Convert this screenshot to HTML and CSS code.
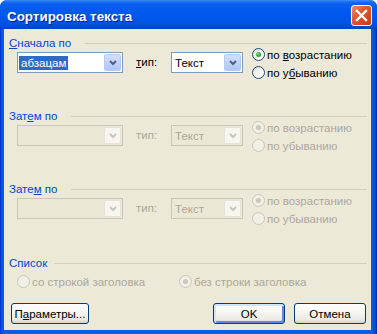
FILE: index.html
```html
<!DOCTYPE html>
<html lang="ru">

<head>
    <meta charset="UTF-8">
    <meta name="viewport" content="width=device-width, initial-scale=1.0">
    <title>Сортировка текста</title>
    <link rel="stylesheet" href="styles.css">
</head>

<body>
    <div class="window">
        <div class="titlebar">
            <div class="title">Сортировка текста</div>
            <div class="close">
                <svg width="13" height="13" viewBox="0 0 13 13">
                    <path d="M2 2 L11 11 M11 2 L2 11" stroke="#fff" stroke-width="2.3" stroke-linecap="square" fill="none" />
                </svg>
            </div>
        </div>

        <div class="client">
            <!-- first key -->
            <div class="group">
                <div class="group-head">
                    <span class="group-label"><u>С</u>начала по</span>
                    <span class="rule"></span>
                </div>
                <div class="sort-row">
                    <div class="combo combo-field">
                        <span class="combo-value"><span class="selected">абзацам</span></span>
                        <span class="drop"><svg width="8" height="6" viewBox="0 0 8 6"><polyline points="1,1 4,4 7,1" /></svg></span>
                    </div>
                    <span class="type-label"><u>т</u>ип:</span>
                    <div class="combo combo-type">
                        <span class="combo-value">Текст</span>
                        <span class="drop"><svg width="8" height="6" viewBox="0 0 8 6"><polyline points="1,1 4,4 7,1" /></svg></span>
                    </div>
                    <div class="radios">
                        <div class="radio">
                            <span class="radio-box"><span class="dot"></span></span>
                            <span class="radio-text">по <u>в</u>озрастанию</span>
                        </div>
                        <div class="radio">
                            <span class="radio-box"></span>
                            <span class="radio-text">по у<u>б</u>ыванию</span>
                        </div>
                    </div>
                </div>
            </div>

            <!-- second key -->
            <div class="group group-next">
                <div class="group-head">
                    <span class="group-label">Зат<u>е</u>м по</span>
                    <span class="rule"></span>
                </div>
                <div class="sort-row disabled">
                    <div class="combo combo-field">
                        <span class="combo-value"></span>
                        <span class="drop"><svg width="8" height="6" viewBox="0 0 8 6"><polyline points="1,1 4,4 7,1" /></svg></span>
                    </div>
                    <span class="type-label">тип:</span>
                    <div class="combo combo-type">
                        <span class="combo-value">Текст</span>
                        <span class="drop"><svg width="8" height="6" viewBox="0 0 8 6"><polyline points="1,1 4,4 7,1" /></svg></span>
                    </div>
                    <div class="radios">
                        <div class="radio">
                            <span class="radio-box"><span class="dot"></span></span>
                            <span class="radio-text">по возрастанию</span>
                        </div>
                        <div class="radio">
                            <span class="radio-box"></span>
                            <span class="radio-text">по убыванию</span>
                        </div>
                    </div>
                </div>
            </div>

            <!-- third key -->
            <div class="group group-next">
                <div class="group-head">
                    <span class="group-label">Зате<u>м</u> по</span>
                    <span class="rule"></span>
                </div>
                <div class="sort-row disabled">
                    <div class="combo combo-field">
                        <span class="combo-value"></span>
                        <span class="drop"><svg width="8" height="6" viewBox="0 0 8 6"><polyline points="1,1 4,4 7,1" /></svg></span>
                    </div>
                    <span class="type-label">тип:</span>
                    <div class="combo combo-type">
                        <span class="combo-value">Текст</span>
                        <span class="drop"><svg width="8" height="6" viewBox="0 0 8 6"><polyline points="1,1 4,4 7,1" /></svg></span>
                    </div>
                    <div class="radios">
                        <div class="radio">
                            <span class="radio-box"><span class="dot"></span></span>
                            <span class="radio-text">по возрастанию</span>
                        </div>
                        <div class="radio">
                            <span class="radio-box"></span>
                            <span class="radio-text">по убыванию</span>
                        </div>
                    </div>
                </div>
            </div>

            <!-- list -->
            <div class="group group-list">
                <div class="group-head">
                    <span class="group-label">Список</span>
                    <span class="rule rule-short"></span>
                </div>
                <div class="list-row disabled">
                    <div class="radio radio-wide">
                        <span class="radio-box"></span>
                        <span class="radio-text">со строкой заголовка</span>
                    </div>
                    <div class="radio">
                        <span class="radio-box"><span class="dot"></span></span>
                        <span class="radio-text">без строки заголовка</span>
                    </div>
                </div>
            </div>

            <div class="footer">
                <button class="btn btn-params">П<u>а</u>раметры...</button>
                <button class="btn btn-ok">OK</button>
                <button class="btn btn-cancel">Отмена</button>
            </div>
        </div>
    </div>
</body>

</html>
```

FILE: styles.css
```css
body {
    margin: 0;
    background-color: #ffffff;
    font-family: 'Liberation Sans', Arial, sans-serif;
    font-size: 11.5px;
    color: #000000;
}

.window {
    width: 377px;
    height: 334px;
    display: flex;
    flex-direction: column;
    background: linear-gradient(90deg, #0019cf 0px, #0855dd 1px, #0a5ae8 3px, #0a5ae8 372px, #0843c8 376px, #001ea0 377px);
    border-radius: 7px 7px 0 0;
    overflow: hidden;
}

.titlebar {
    height: 29px;
    flex: none;
    display: flex;
    justify-content: space-between;
    align-items: flex-start;
    padding: 0 5px 0 7px;
    background: linear-gradient(180deg, #3d8ef5 0px, #1a6ef2 2px, #0a5ef0 4px, #0058ee 12px, #0055e6 22px, #0049d4 27px, #003fc0 29px);
}

.title {
    margin-top: 9px;
    font-size: 13.4px;
    line-height: 15px;
    font-weight: bold;
    color: #ffffff;
    text-shadow: 1px 1px 0 #0a1e8c;
}

.close {
    margin-top: 5px;
    width: 19px;
    height: 19px;
    border: 1px solid #ffffff;
    border-radius: 3px;
    background: linear-gradient(135deg, #ef8a6a 0%, #e2582f 40%, #d0441c 80%, #c23a16 100%);
    display: flex;
    align-items: center;
    justify-content: center;
}

.client {
    flex: 1;
    margin: 0 6px 4px 4px;
    padding: 8px 4px 6px 5px;
    background-color: #ece9d8;
    display: flex;
    flex-direction: column;
}

/* group headers */

.group-head {
    height: 13px;
    display: flex;
    align-items: center;
}

.group-label {
    line-height: 13px;
    color: #0046d5;
}

.rule {
    flex: 1;
    height: 1px;
    margin-left: 14px;
    background-color: #d0d0bf;
}

.rule-short {
    margin-left: 7px;
}

.group-next {
    margin-top: 26px;
}

.group-list {
    margin-top: 27px;
}

/* sort rows */

.sort-row {
    display: flex;
    align-items: flex-start;
    margin-top: -2px;
    padding-left: 8px;
}

.combo {
    margin-top: 4px;
    height: 19px;
    border: 1px solid #7f9db9;
    background-color: #ffffff;
    display: flex;
    align-items: center;
}

.combo-field {
    width: 104px;
}

.combo-type {
    width: 70px;
}

.combo-value {
    flex: 1;
    padding-left: 1px;
    line-height: 14px;
    height: 14px;
}

.combo-type .combo-value {
    padding-left: 3px;
}

.selected {
    display: inline-block;
    padding: 0 2px;
    background-color: #316ac5;
    color: #ffffff;
}

.drop {
    width: 15px;
    height: 15px;
    margin-right: 1px;
    border: 1px solid #b7c9f6;
    border-radius: 2px;
    background: linear-gradient(180deg, #d2defc 0%, #c1d3fb 50%, #b0c6f8 100%);
    display: flex;
    align-items: center;
    justify-content: center;
}

.drop polyline {
    fill: none;
    stroke: #4d6185;
    stroke-width: 2;
}

.type-label {
    margin: 4px 0 0 13px;
    width: 35px;
    height: 21px;
    line-height: 21px;
}

.radios {
    margin-left: 9px;
    display: flex;
    flex-direction: column;
}

/* radio buttons */

.radio {
    height: 18px;
    display: flex;
    align-items: flex-start;
}

.radio-box {
    width: 11px;
    height: 11px;
    border: 1px solid #1c5180;
    border-radius: 50%;
    background: linear-gradient(135deg, #dcd9cf 0%, #f4f3ee 45%, #ffffff 75%);
    display: flex;
    align-items: center;
    justify-content: center;
}

.dot {
    width: 5px;
    height: 5px;
    border-radius: 50%;
    background: radial-gradient(circle at 35% 35%, #7be37b 0%, #2fb12f 50%, #1a8a1a 100%);
}

.radio-text {
    margin: 0 0 0 2px;
    line-height: 13px;
    margin-top: 1px;
}

.list-row {
    display: flex;
    margin-top: 5px;
    padding-left: 8px;
}

.radio-wide {
    width: 162px;
}

/* disabled state */

.disabled .combo {
    border-color: #c9c7ba;
    background-color: #ebe8d7;
}

.disabled .combo-value,
.disabled .type-label,
.disabled .radio-text {
    color: #aca899;
}

.disabled .drop {
    border-color: #e6e4da;
    background: #f7f6f1;
}

.disabled .drop polyline {
    stroke: #c9c7ba;
}

.disabled .radio-box {
    border-color: #cac8bb;
    background: #f2f0e6;
}

.disabled .dot {
    background: #cac8bb;
}

/* buttons */

.footer {
    margin-top: auto;
    display: flex;
}

.btn {
    height: 21px;
    padding: 0;
    border: 1px solid #003c74;
    border-radius: 3px;
    background: linear-gradient(180deg, #ffffff 0%, #f6f5f1 45%, #ecebe4 80%, #d8d3c8 100%);
    font-family: 'Liberation Sans', Arial, sans-serif;
    font-size: 11.5px;
    color: #000000;
}

.btn-params {
    width: 78px;
    margin-left: 2px;
}

.btn-ok {
    width: 72px;
    margin-left: auto;
    box-shadow: inset 1px 1px 0 1px #cee7ff, inset -1px -1px 0 1px #6982ee;
}

.btn-cancel {
    width: 72px;
    margin: 0 1px 0 9px;
}
```
